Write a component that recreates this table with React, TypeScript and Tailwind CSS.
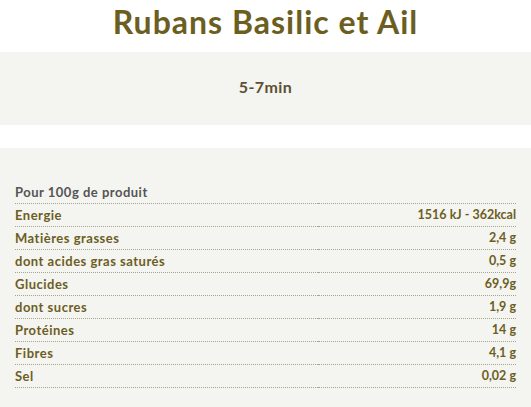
const rows = [
  { label: 'Energie', value: '1516 kJ - 362kcal' },
  { label: 'Matières grasses', value: '2,4 g' },
  { label: 'dont acides gras saturés', value: '0,5 g' },
  { label: 'Glucides', value: '69,9g' },
  { label: 'dont sucres', value: '1,9 g' },
  { label: 'Protéines', value: '14 g' },
  { label: 'Fibres', value: '4,1 g' },
  { label: 'Sel', value: '0,02 g' },
];

export default function App() {
  return (
    <div className="min-h-[407px] bg-white font-['Lato','Liberation_Sans',sans-serif]">
      {/* Title */}
      <h1 className="h-[52px] pt-[2px] text-center text-[32px] font-bold leading-[40px] tracking-[1px] text-[#6c5e1f]">
        Rubans Basilic et Ail
      </h1>

      {/* Cooking time */}
      <div className="flex h-[73px] items-center justify-center bg-[#f4f4f0]">
        <span className="-mt-[3px] text-[16px] font-bold tracking-[0.4px] text-[#5b5030]">5-7min</span>
      </div>

      {/* Nutrition table */}
      <div className="mt-[23px] bg-[#f4f4f0] px-[15px] pb-[21px] pt-[32px]">
        <table className="w-[501px] border-collapse text-[12.5px] font-bold">
          <tbody>
            <tr className="h-[23px] border-b border-dotted border-[#a9a388]">
              <td className="pt-[2px] align-middle text-[13px] tracking-[0.5px] text-[#555555]" colSpan={2}>
                Pour 100g de produit
              </td>
            </tr>
            {rows.map((r) => (
              <tr key={r.label} className="h-[23px] border-b border-dotted border-[#a9a388] text-[#6c5e1f]">
                <td className="pt-[2px] align-middle text-[13px] tracking-[0.5px]">{r.label}</td>
                <td className="pt-[2px] text-right align-middle">{r.value}</td>
              </tr>
            ))}
          </tbody>
        </table>
      </div>
    </div>
  );
}
